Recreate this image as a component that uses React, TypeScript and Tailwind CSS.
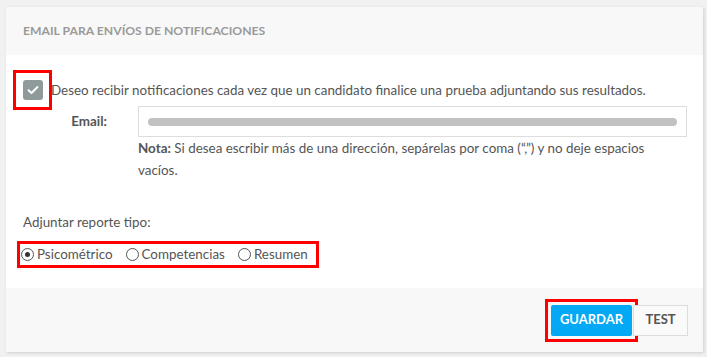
import React from 'react';

const FONT = { fontFamily: 'Lato, "Open Sans", sans-serif' };

const Radio = ({ label, checked }: { label: string; checked?: boolean }) => (
  <label className="flex items-center gap-[3px]">
    <span className="flex h-[13px] w-[13px] items-center justify-center rounded-full border border-[#555] bg-white">
      {checked && <span className="h-[5px] w-[5px] rounded-full bg-[#333]" />}
    </span>
    <span>{label}</span>
  </label>
);

export default function App() {
  return (
    <div className="min-h-[357px] w-[707px] bg-[#f1f1f1] pl-[6px] pt-[7px]" style={FONT}>
      <div className="flex h-[345px] w-[697px] flex-col bg-white text-[13.4px] text-[#555] shadow-[1px_1px_3px_rgba(0,0,0,0.15)]">
        {/* header */}
        <div className="flex h-[48px] items-center bg-[#f8f8f8] px-[17px]">
          <h3 className="text-[12.2px] font-bold uppercase text-[#9a9a9a]">
            Email para envíos de notificaciones
          </h3>
        </div>

        {/* body */}
        <div className="flex-1 pl-[7px] pt-[15px]">
          <div className="flex items-center">
            <span className="flex h-[40px] w-[39px] items-center justify-center border-[3px] border-[#f00]">
              <span className="flex h-[20px] w-[20px] items-center justify-center rounded-[3px] bg-[#8f9b9b]">
                <svg width="12" height="10" viewBox="0 0 12 10">
                  <path d="M1.5 5.2 4.5 8 10.5 2" fill="none" stroke="#fff" strokeWidth="2" strokeLinecap="round" strokeLinejoin="round" />
                </svg>
              </span>
            </span>
            <span className="-ml-[1px] leading-[22px]">
              Deseo recibir notificaciones cada vez que un candidato finalice una prueba adjuntando sus resultados.
            </span>
          </div>

          <div className="-mt-[4px] flex">
            <div className="flex h-[31px] w-[100px] items-center justify-end pr-[6px] font-bold">Email:</div>
            <div className="ml-[25px] w-[549px]">
              <div className="flex h-[31px] items-center border border-[#ddd] px-[9px]">
                <div className="h-[8px] w-full rounded-full bg-[#c2c2c2] blur-[0.6px]" />
              </div>
              <p className="pr-[40px] leading-[22px]">
                <span className="font-bold">Nota:</span>{' '}Si desea escribir más de una dirección, sepárelas por coma (“,”) y no deje espacios vacíos.
              </p>
            </div>
          </div>

          <p className="mt-[30px] pl-[10px] leading-[22px]">Adjuntar reporte tipo:</p>

          <div className="mt-[8px] ml-[4px] flex h-[27px] w-[302px] items-center gap-[13px] border-[3px] border-[#f00] pl-[1px]">
            <Radio label="Psicométrico" checked />
            <Radio label="Competencias" />
            <Radio label="Resumen" />
          </div>
        </div>

        {/* footer */}
        <div className="flex h-[64px] items-center justify-end bg-[#f8f8f8] pr-[15px]">
          <div className="border-[3px] border-[#f00] p-[3px]">
            <button className="h-[31px] w-[81px] rounded-[2px] bg-[#03a9f4] text-[13px] font-bold text-white">GUARDAR</button>
          </div>
          <button className="h-[31px] w-[55px] -ml-[5px] border border-[#ddd] bg-[#fafafa] text-[13px] font-bold text-[#555]">TEST</button>
        </div>
      </div>
    </div>
  );
}
